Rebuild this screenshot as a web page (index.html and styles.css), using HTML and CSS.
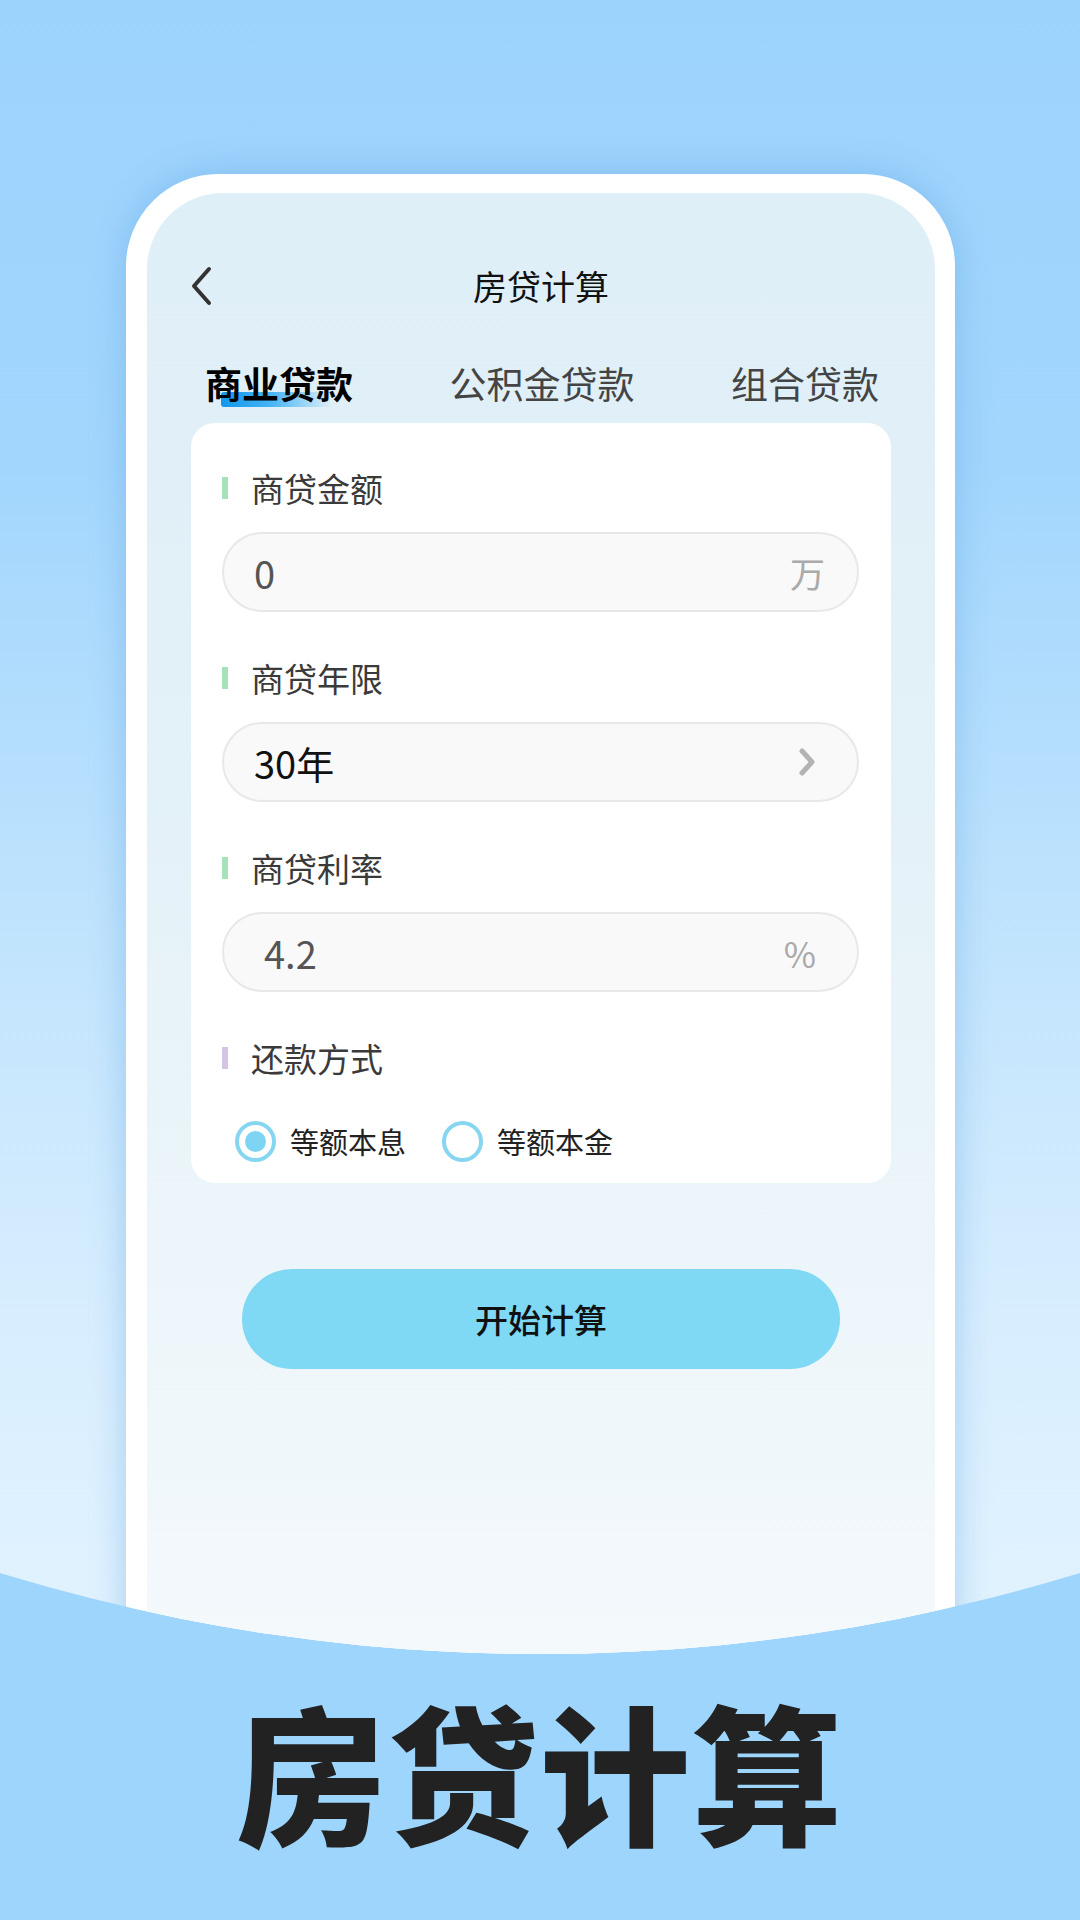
FILE: index.html
```html
<!DOCTYPE html>
<html lang="zh-CN">
<head>
	<meta charset="UTF-8">
	<title>房贷计算</title>
	<link rel="stylesheet" href="styles.css">
</head>
<body>
	<div class="stage">
		<div class="phone">
			<div class="screen">
				<div class="topBar">
					<a class="backBtn" href="javascript:;">
						<svg width="24" height="40" viewBox="0 0 24 40"><path d="M19 3 L4 20 L19 37" fill="none" stroke="#333" stroke-width="4" stroke-linecap="round" stroke-linejoin="round"/></svg>
					</a>
					<div class="pageTitle">房贷计算</div>
					<div></div>
				</div>

				<ul class="tabs">
					<li class="tab active"><span>商业贷款</span></li>
					<li class="tab"><span>公积金贷款</span></li>
					<li class="tab"><span>组合贷款</span></li>
				</ul>

				<div class="card">
					<div class="label">商贷金额</div>
					<div class="field">
						<span class="value muted">0</span>
						<span class="unit">万</span>
					</div>

					<div class="label">商贷年限</div>
					<div class="field">
						<span class="value">30年</span>
						<svg class="arrow" width="20" height="32" viewBox="0 0 20 32"><path d="M5 5 L15 16 L5 27" fill="none" stroke="#b3b3b3" stroke-width="5" stroke-linecap="round" stroke-linejoin="round"/></svg>
					</div>

					<div class="label">商贷利率</div>
					<div class="field">
						<span class="value muted indent">4.2</span>
						<span class="unit pct">%</span>
					</div>

					<div class="label purple">还款方式</div>
					<div class="radios">
						<label class="radio checked"><i></i>等额本息</label>
						<label class="radio"><i></i>等额本金</label>
					</div>
				</div>

				<a class="calcBtn" href="javascript:;">开始计算</a>
			</div>
		</div>
	</div>
	<div class="slogan">房贷计算</div>
</body>
</html>
```

FILE: styles.css
```css
html,body,ul{margin:0;padding:0;}
ul{
	list-style: none;
}
a{
	text-decoration: none;
	color: inherit;
}
body{
	width: 1080px;
	background-color: #9dd5fd;
	font-family: "Noto Sans CJK SC", "Noto Sans", sans-serif;
	color: #222;
}
.stage{
	height: 1654px;
	padding-top: 174px;
	box-sizing: border-box;
	overflow: hidden;
	background: linear-gradient(180deg, #9cd3fd 0%, #a2d6fd 28%, #bfe3fd 55%, #d8eefe 80%, #e2f3fe 100%);
	clip-path: circle(1840px at 540px -186px);
}
.phone{
	width: 829px;
	height: 1520px;
	margin-left: 126px;
	padding: 19px 20px 0 21px;
	box-sizing: border-box;
	background-color: #fff;
	border-radius: 92px 92px 0 0;
	box-shadow: 0 0 34px rgba(90, 160, 225, 0.45);
}
.screen{
	height: 100%;
	border-radius: 76px 76px 0 0;
	background: linear-gradient(180deg, #dfeff7 0%, #e3f1f8 40%, #edf6fa 75%, #f5f9fc 100%);
	overflow: hidden;
}
.topBar{
	display: grid;
	grid-template-columns: 1fr auto 1fr;
	align-items: center;
	height: 70px;
	margin-top: 58px;
	padding: 0 43px;
}
.backBtn{
	display: flex;
	width: 24px;
}
.pageTitle{
	font-size: 34px;
	color: #111;
	line-height: 70px;
}
.tabs{
	display: flex;
	justify-content: space-between;
	margin-top: 37px;
	padding: 0 56px 0 58px;
}
.tab{
	position: relative;
	z-index: 0;
	font-size: 37px;
	line-height: 50px;
	color: #444;
}
.tab.active{
	color: #000;
	font-weight: bold;
}
.tab.active::before{
	content: "";
	position: absolute;
	z-index: -1;
	left: 16px;
	top: 34px;
	width: 111px;
	height: 15px;
	border-radius: 3px 0 0 3px;
	background: linear-gradient(90deg, #1296ee 0%, #46b4f4 45%, rgba(160, 220, 250, 0) 100%);
}
.card{
	margin: 15px 44px 0;
	padding: 43px 32px 21px 31px;
	background-color: #fff;
	border-radius: 24px;
}
.label{
	position: relative;
	padding-left: 29px;
	font-size: 33px;
	line-height: 44px;
	color: #3a3a3a;
	margin-top: 44px;
}
.label:first-child{
	margin-top: 0;
}
.label::before{
	content: "";
	position: absolute;
	left: 0;
	top: 11px;
	width: 6px;
	height: 22px;
	background-color: #a6e2b8;
}
.label.purple::before{
	background-color: #d6c4e4;
}
.field{
	display: flex;
	align-items: center;
	justify-content: space-between;
	height: 80px;
	margin-top: 22px;
	padding: 0 32px 0 30px;
	box-sizing: border-box;
	background-color: #f9f9f9;
	border: 2px solid #e8e8e8;
	border-radius: 40px;
}
.value{
	font-size: 38px;
	color: #111;
}
.value.muted{
	color: #555;
}
.value.indent{
	padding-left: 10px;
}
.unit{
	font-size: 35px;
	color: #aaa;
}
.unit.pct{
	margin-right: 9px;
}
.arrow{
	margin-right: 8px;
}
.radios{
	display: flex;
	align-items: center;
	height: 42px;
	margin-top: 40px;
	padding-left: 13px;
}
.radio{
	display: flex;
	align-items: center;
	font-size: 29px;
	color: #222;
	margin-right: 36px;
}
.radio i{
	width: 41px;
	height: 41px;
	box-sizing: border-box;
	border: 4px solid #86d6f2;
	border-radius: 50%;
	margin-right: 14px;
	display: flex;
	align-items: center;
	justify-content: center;
}
.radio.checked i::after{
	content: "";
	width: 21px;
	height: 21px;
	border-radius: 50%;
	background-color: #7dd5f3;
}
.calcBtn{
	display: block;
	width: 598px;
	height: 100px;
	margin: 86px auto 0;
	border-radius: 50px;
	background-color: #7fd8f4;
	text-align: center;
	line-height: 100px;
	font-size: 33px;
	font-weight: 500;
	color: #111;
}
.slogan{
	margin-top: 20px;
	text-align: center;
	font-size: 150px;
	line-height: 190px;
	font-weight: 900;
	color: #222;
	letter-spacing: 2px;
}
```
